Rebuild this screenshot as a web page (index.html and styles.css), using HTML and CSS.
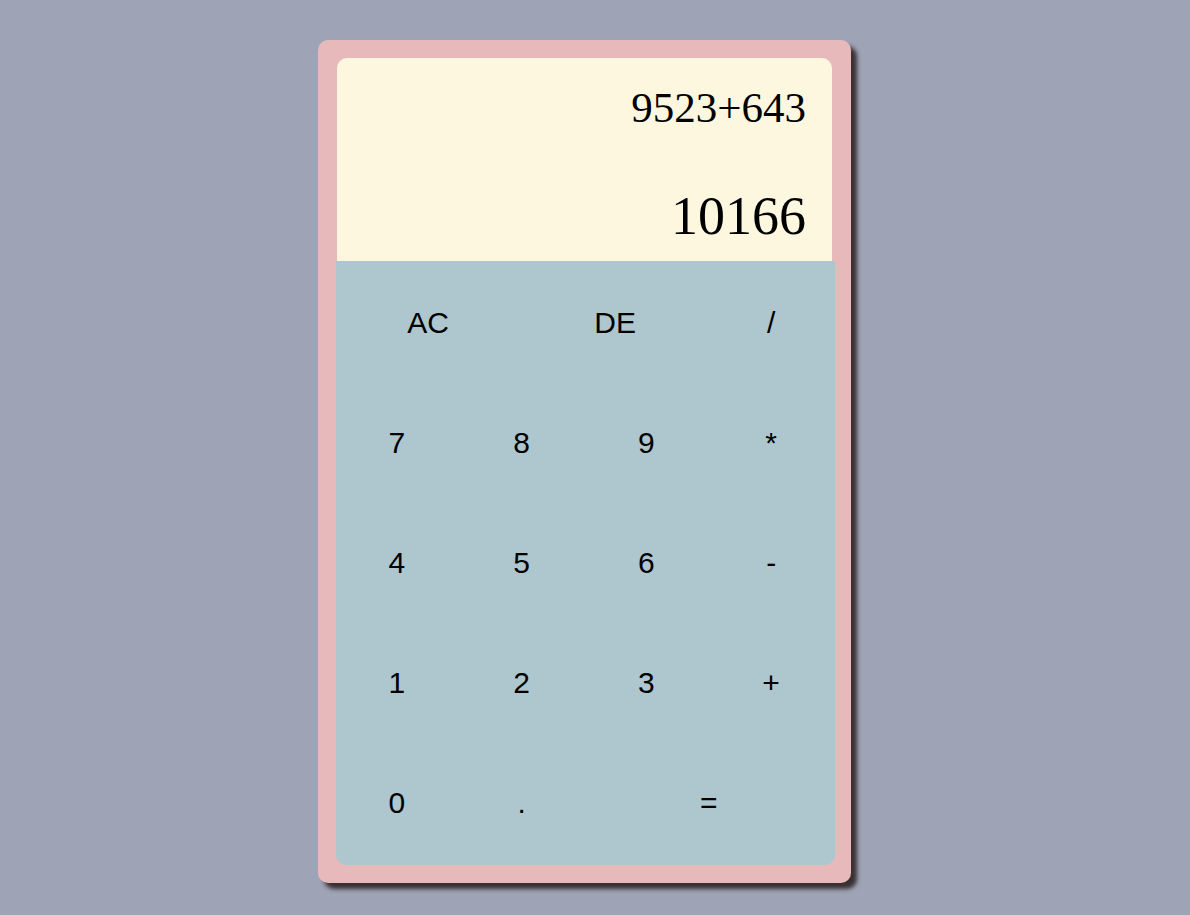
FILE: index.html
```html
<!DOCTYPE html>
<html lang="en">
<head>
<meta charset="utf-8">
<title>Calculator</title>
<link rel="stylesheet" href="styles.css">
</head>
<body>
<div class="calculator">
  <div class="display">
    <div class="expression">9523+643</div>
    <div class="result">10166</div>
  </div>
  <div class="keypad">
    <button class="key wide">AC</button>
    <button class="key wide">DE</button>
    <button class="key">/</button>
    <button class="key">7</button>
    <button class="key">8</button>
    <button class="key">9</button>
    <button class="key">*</button>
    <button class="key">4</button>
    <button class="key">5</button>
    <button class="key">6</button>
    <button class="key">-</button>
    <button class="key">1</button>
    <button class="key">2</button>
    <button class="key">3</button>
    <button class="key">+</button>
    <button class="key">0</button>
    <button class="key">.</button>
    <button class="key double">=</button>
  </div>
</div>
</body>
</html>
```
FILE: styles.css
```css
html, body {
  margin: 0;
  padding: 0;
}

body {
  background: #9ea4b5;
  min-height: 915px;
  padding-top: 40px;
  box-sizing: border-box;
}

.calculator {
  width: 533px;
  height: 843px;
  margin-left: 318px;
  box-sizing: border-box;
  padding: 18px 0 0 18px;
  background: #e8b9bb;
  border-radius: 10px;
  box-shadow: 6px 6px 4px rgba(45, 35, 37, 0.9);
}

.display {
  width: 495px;
  height: 203px;
  margin-left: 1px;
  box-sizing: border-box;
  background: #fcf7de;
  border-radius: 10px 10px 0 0;
  padding: 28px 26px 0 0;
  display: flex;
  flex-direction: column;
  align-items: flex-end;
  gap: 60px;
  font-family: "Liberation Serif", "Times New Roman", serif;
  color: #000;
}

.expression {
  font-size: 43px;
  line-height: 43px;
}

.result {
  font-size: 54px;
  line-height: 54px;
}

.keypad {
  width: 499px;
  height: 604px;
  box-sizing: border-box;
  padding: 2px 0;
  background: #aec6ce;
  border-radius: 0 0 10px 10px;
  display: grid;
  grid-template-columns: repeat(8, 1fr);
  grid-auto-rows: 120px;
}

.key {
  grid-column: span 2;
  background: transparent;
  border: none;
  margin: 0;
  padding: 0 3px 0 0;
  font-family: "Liberation Sans", Arial, sans-serif;
  font-size: 30px;
  line-height: 30px;
  color: #000;
  cursor: pointer;
}

.key.wide {
  grid-column: span 3;
}

.key.double {
  grid-column: span 4;
}
```
